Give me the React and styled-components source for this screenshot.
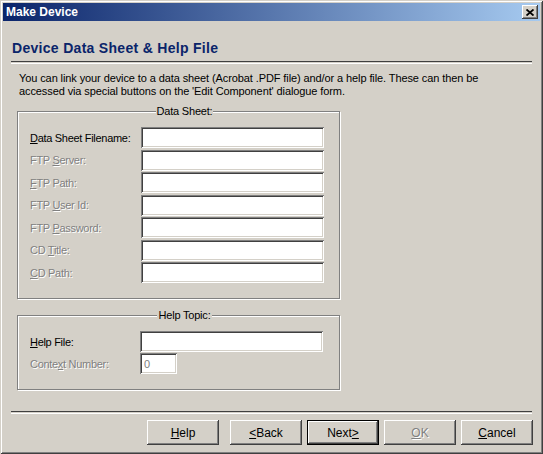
import React from "react";
import styled, { createGlobalStyle } from "styled-components";

const GlobalStyle = createGlobalStyle`
  html, body {
    margin: 0;
    padding: 0;
    background: #d4d0c8;
  }
  body {
    font-family: "Liberation Sans", Arial, sans-serif;
    font-size: 11px;
    color: #000;
  }
`;

const Window = styled.div`
  width: 543px;
  height: 454px;
  box-sizing: border-box;
  padding: 3px;
  background: #d4d0c8;
  box-shadow: inset 1px 1px 0 #d4d0c8, inset -1px -1px 0 #404040,
    inset 2px 2px 0 #ffffff, inset -2px -2px 0 #808080;
  display: flex;
  flex-direction: column;
`;

const TitleBar = styled.div`
  height: 18px;
  display: flex;
  align-items: center;
  justify-content: space-between;
  padding-left: 3px;
  padding-right: 2px;
  background: linear-gradient(to right, #0a246a, #a6caf0);
  color: #fff;
  font-weight: bold;
  font-size: 12px;
`;

const CloseButton = styled.div`
  width: 16px;
  height: 14px;
  box-sizing: border-box;
  background: #d4d0c8;
  display: flex;
  align-items: center;
  justify-content: center;
  box-shadow: inset -1px -1px 0 #404040, inset 1px 1px 0 #ffffff,
    inset -2px -2px 0 #808080;
`;

const Content = styled.div`
  flex: 1;
  display: flex;
  flex-direction: column;
  padding: 0 8px;
`;

const Heading = styled.h1`
  margin: 19px 0 0 1px;
  font-size: 14px;
  line-height: 16px;
  font-weight: bold;
  letter-spacing: 0.3px;
  color: #0a246a;
`;

const Rule = styled.div`
  margin-top: ${props => props.$top}px;
  height: 1px;
  border-top: 1px solid ${props => props.$dark};
  border-bottom: 1px solid #ffffff;
`;

const Intro = styled.p`
  margin: 8px 0 0 8px;
  line-height: 13px;
  letter-spacing: -0.1px;
  white-space: nowrap;
`;

const GroupBox = styled.div`
  width: 323px;
  box-sizing: border-box;
  margin: ${props => props.$top}px 0 0 6px;
  padding: 0 0 15px 12px;
  border: 1px solid #808080;
  box-shadow: inset 1px 1px 0 #ffffff, 1px 1px 0 #ffffff;
`;

const Caption = styled.div`
  width: fit-content;
  margin: -7px auto 0;
  padding: 0 1px;
  line-height: 13px;
  letter-spacing: -0.2px;
  background: #d4d0c8;
`;

const Form = styled.div`
  margin-top: ${props => props.$top}px;
  display: grid;
  grid-template-columns: ${props => props.$label}px auto;
  grid-auto-rows: 21px;
  row-gap: ${props => props.$gap}px;
  align-items: center;
`;

const Label = styled.label`
  white-space: nowrap;
  letter-spacing: -0.3px;
  color: ${props => (props.$disabled ? "#808080" : "#000")};
  text-shadow: ${props => (props.$disabled ? "1px 1px 0 #ffffff" : "none")};
`;

const Field = styled.input`
  width: ${props => props.$width}px;
  height: 21px;
  box-sizing: border-box;
  margin: 0;
  padding: 0 4px;
  border: none;
  outline: none;
  background: #fff;
  font-family: "Liberation Sans", Arial, sans-serif;
  font-size: 11px;
  color: ${props => (props.$disabled ? "#808080" : "#000")};
  box-shadow: inset 1px 1px 0 #808080, inset -1px -1px 0 #ffffff,
    inset 2px 2px 0 #404040, inset -2px -2px 0 #d4d0c8;
`;

const ButtonRow = styled.div`
  margin: 6px -1px 0 0;
  display: flex;
  justify-content: flex-end;
  gap: 5px;
`;

const Button = styled.div`
  width: 72px;
  height: 25px;
  box-sizing: border-box;
  margin-left: ${props => props.$gapLeft || 0}px;
  display: flex;
  align-items: center;
  justify-content: center;
  font-size: 12px;
  background: #d4d0c8;
  color: ${props => (props.$disabled ? "#808080" : "#000")};
  text-shadow: ${props => (props.$disabled ? "1px 1px 0 #ffffff" : "none")};
  box-shadow: ${props =>
    props.$default
      ? "inset 0 0 0 1px #000, inset -2px -2px 0 #404040, inset 2px 2px 0 #ffffff, inset -3px -3px 0 #808080"
      : "inset -1px -1px 0 #404040, inset 1px 1px 0 #ffffff, inset -2px -2px 0 #808080"};
`;

const dataRows = [
  { pre: "", key: "D", rest: "ata Sheet Filename:" },
  { pre: "FTP ", key: "S", rest: "erver:", disabled: true },
  { pre: "", key: "F", rest: "TP Path:", disabled: true },
  { pre: "FTP ", key: "U", rest: "ser Id:", disabled: true },
  { pre: "FTP ", key: "P", rest: "assword:", disabled: true },
  { pre: "CD ", key: "T", rest: "itle:", disabled: true },
  { pre: "", key: "C", rest: "D Path:", disabled: true },
];

const CloseGlyph = () => (
  <svg width="8" height="7" viewBox="0 0 8 7">
    <path d="M0.5 0.5 L7.5 6.5 M7.5 0.5 L0.5 6.5" stroke="#000" strokeWidth="1.8" />
  </svg>
);

export default function App() {
  return (
    <>
      <GlobalStyle />
      <Window>
        <TitleBar>
          <span>Make Device</span>
          <CloseButton>
            <CloseGlyph />
          </CloseButton>
        </TitleBar>
        <Content>
          <Heading>Device Data Sheet &amp; Help File</Heading>
          <Rule $top={5} $dark="#404040" />
          <Intro>
            You can link your device to a data sheet (Acrobat .PDF file) and/or a help file. These can then be
            <br />
            accessed via special buttons on the 'Edit Component' dialogue form.
          </Intro>

          <GroupBox $top={13}>
            <Caption>Data Sheet:</Caption>
            <Form $top={9} $label={111} $gap={1.5}>
              {dataRows.map(row => (
                <React.Fragment key={row.key}>
                  <Label $disabled={row.disabled}>
                    {row.pre}
                    <u>{row.key}</u>
                    {row.rest}
                  </Label>
                  <Field $width={183} readOnly />
                </React.Fragment>
              ))}
            </Form>
          </GroupBox>

          <GroupBox $top={16}>
            <Caption>Help Topic:</Caption>
            <Form $top={9} $label={110} $gap={1}>
              <Label>
                <u>H</u>elp File:
              </Label>
              <Field $width={183} readOnly />
              <Label $disabled>
                Conte<u>x</u>t Number:
              </Label>
              <Field $width={37} $disabled readOnly defaultValue="0" />
            </Form>
          </GroupBox>

          <Rule $top={21} $dark="#404040" />
          <ButtonRow>
            <Button>
              <u>H</u>elp
            </Button>
            <Button $gapLeft={6}>
              <u>&lt;</u>Back
            </Button>
            <Button $default>
              Next<u>&gt;</u>
            </Button>
            <Button $disabled>
              <u>O</u>K
            </Button>
            <Button>
              <u>C</u>ancel
            </Button>
          </ButtonRow>
        </Content>
      </Window>
    </>
  );
}
